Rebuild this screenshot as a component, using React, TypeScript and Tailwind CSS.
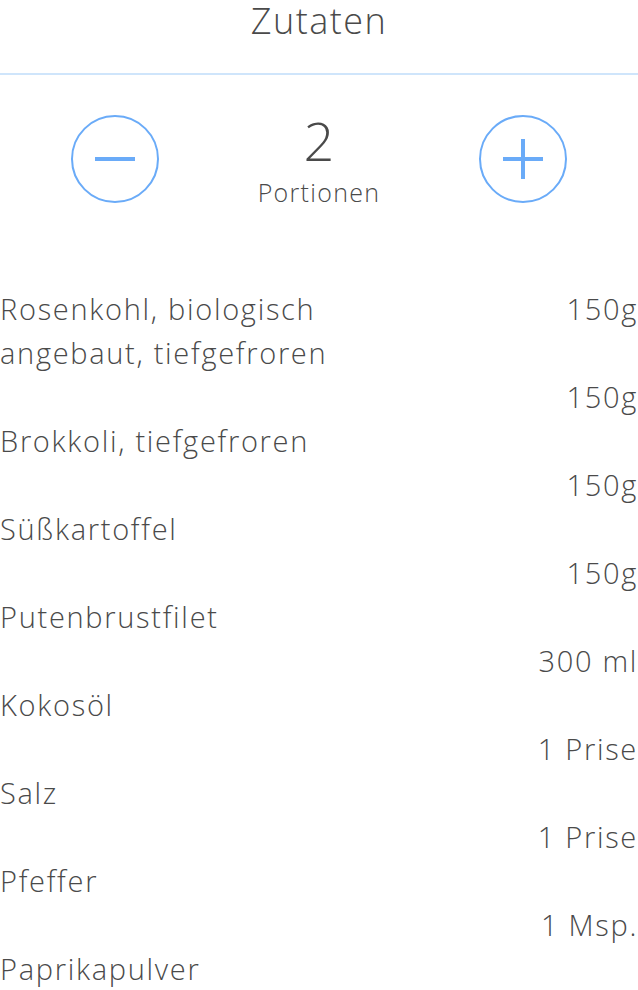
const ingredients = [
  { name: "Rosenkohl, biologisch angebaut, tiefgefroren", amount: "150g", inline: true },
  { name: "Brokkoli, tiefgefroren", amount: "150g" },
  { name: "Süßkartoffel", amount: "150g" },
  { name: "Putenbrustfilet", amount: "150g" },
  { name: "Kokosöl", amount: "300 ml" },
  { name: "Salz", amount: "1 Prise" },
  { name: "Pfeffer", amount: "1 Prise" },
  { name: "Paprikapulver", amount: "1 Msp." },
];

function RoundButton({ plus }: { plus?: boolean }) {
  return (
    <button className="w-[88px] h-[88px] rounded-full border-2 border-[#6aabf8] flex items-center justify-center">
      <svg width="42" height="42" viewBox="0 0 42 42">
        <rect x="1" y="19" width="40" height="4" fill="#6aabf8" />
        {plus && <rect x="19" y="1" width="4" height="40" fill="#6aabf8" />}
      </svg>
    </button>
  );
}

export default function App() {
  return (
    <div className="w-[638px] h-[990px] bg-white text-[#4a4a4a] font-light overflow-hidden" style={{ fontFamily: "'Open Sans', sans-serif" }}>
      <div className="h-[75px] border-b-2 border-[#cfe5fb] flex justify-center">
        <h1 className="text-[36px] leading-[42px] tracking-[1.5px] font-light">Zutaten</h1>
      </div>

      <div className="flex justify-between px-[71px] pt-[40px] h-[212px] items-start">
        <RoundButton />
        <div className="flex flex-col items-center">
          <span className="text-[54px] leading-[54px] mt-[-2px]">2</span>
          <span className="text-[25px] leading-[30px] tracking-[1.3px] mt-[10px]">Portionen</span>
        </div>
        <RoundButton plus />
      </div>

      <div className="text-[29px] leading-[44px] tracking-[1.7px]">
        {ingredients.map((item, i) =>
          item.inline ? (
            <div key={i} className="flex justify-between">
              <span className="w-[340px]">{item.name}</span>
              <span>{item.amount}</span>
            </div>
          ) : (
            <div key={i}>
              <div className="text-right">{item.amount}</div>
              <div>{item.name}</div>
            </div>
          )
        )}
      </div>
    </div>
  );
}
